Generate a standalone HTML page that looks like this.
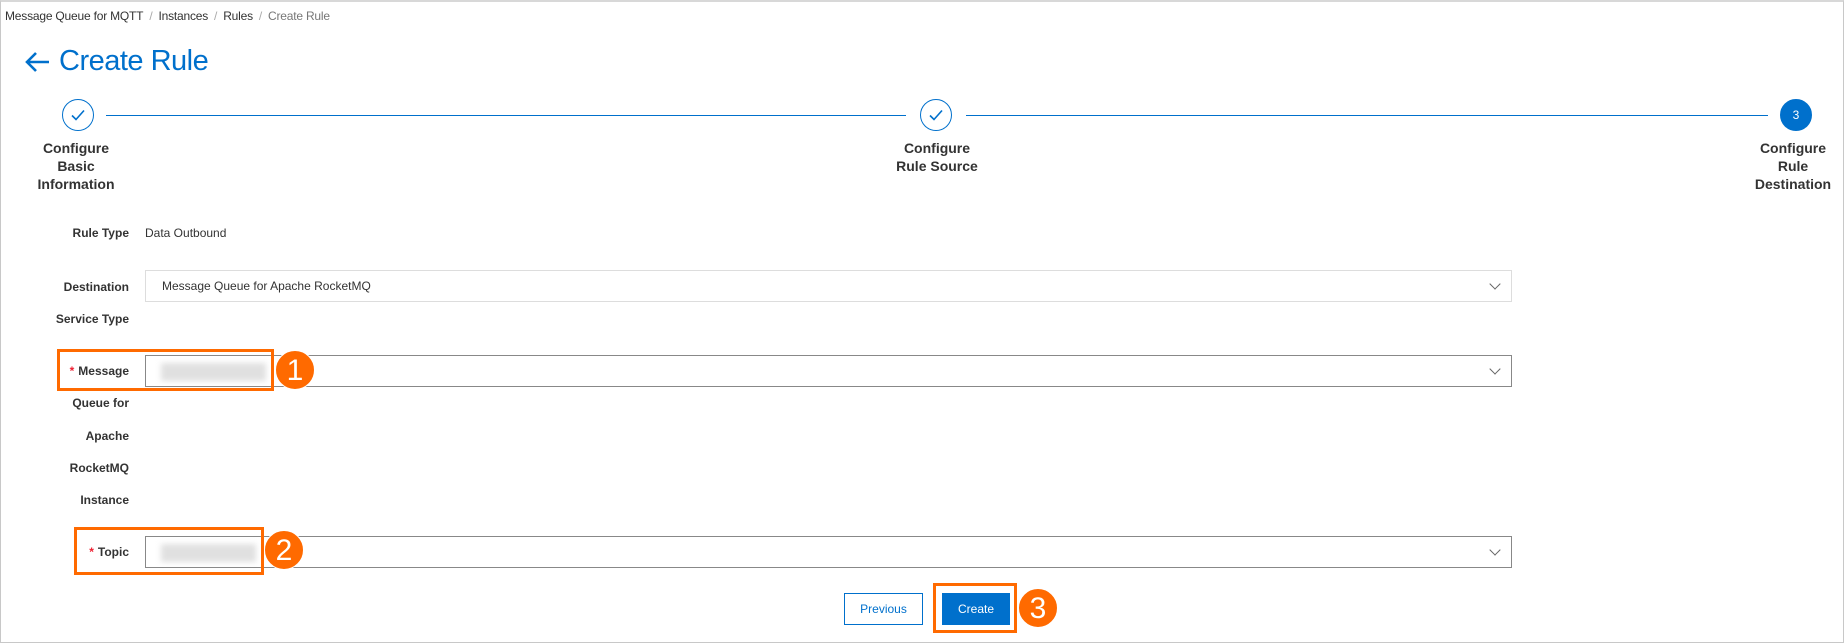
<!DOCTYPE html>
<html><head><meta charset="utf-8"><style>
*{margin:0;padding:0;box-sizing:border-box}
body{width:1844px;height:643px;position:relative;background:#fff;font-family:"Liberation Sans",Tahoma,sans-serif;color:#333;overflow:hidden}
.frame{position:absolute;left:0;top:0;width:1844px;height:643px;border:1px solid #c8c8c8;border-top:2px solid #d8d8d8}
.a{position:absolute;white-space:nowrap}
.bc{top:9px;left:5px;font-size:12px;color:#333;letter-spacing:-0.2px}
.bc .s{color:#aaa;margin:0 6px}
.bc .l{color:#777}
.title{top:45px;left:59px;font-size:29px;color:#0070cc;letter-spacing:-0.5px}
.circ{position:absolute;width:32px;height:32px;border-radius:50%;border:1px solid #0070cc;background:#fff}
.line{position:absolute;height:1px;background:#0070cc;top:115px}
.sl{position:absolute;font-size:14px;font-weight:bold;line-height:18px;text-align:center;color:#333;width:160px;top:139px}
.lab{position:absolute;font-size:12px;font-weight:bold;color:#333;text-align:right;width:100px;left:29px}
.sel{position:absolute;left:145px;width:1367px;height:32px;background:#fff}
.chev{position:absolute;right:12px;top:9px;width:8px;height:8px;border-right:1px solid #666;border-bottom:1px solid #666;transform:rotate(45deg)}
.blur{position:absolute;left:15px;top:7px;height:18px;background:#e0e0e0;filter:blur(3px)}
.ob{position:absolute;border:3px solid #ff6a00}
.num{position:absolute;width:40px;height:40px;border-radius:50%;background:#ff6a00;color:#fff;font-size:30px;text-align:center;line-height:40px;border:1px solid #fff}
.req{color:#e23;margin-right:4px}
</style></head><body>
<div class="frame"></div>
<div class="a bc">Message Queue for MQTT<span class="s">/</span>Instances<span class="s">/</span>Rules<span class="s">/</span><span class="l">Create Rule</span></div>
<svg class="a" style="left:24px;top:50px" width="28" height="24" viewBox="0 0 28 24"><path d="M25 12H3M12 3L3 12l9 9" fill="none" stroke="#0070cc" stroke-width="2.6"/></svg>
<div class="a title">Create Rule</div>

<div class="circ" style="left:62px;top:99px"><svg width="30" height="30" viewBox="0 0 30 30"><path d="M9 15.5l4 4 8-9" fill="none" stroke="#0070cc" stroke-width="1.6"/></svg></div>
<div class="line" style="left:106px;width:800px"></div>
<div class="circ" style="left:920px;top:99px"><svg width="30" height="30" viewBox="0 0 30 30"><path d="M9 15.5l4 4 8-9" fill="none" stroke="#0070cc" stroke-width="1.6"/></svg></div>
<div class="line" style="left:966px;width:802px"></div>
<div class="circ" style="left:1780px;top:99px;background:#0070cc;color:#fff;font-size:12px;text-align:center;line-height:30px">3</div>
<div class="sl" style="left:-4px">Configure<br>Basic<br>Information</div>
<div class="sl" style="left:857px">Configure<br>Rule Source</div>
<div class="sl" style="left:1713px">Configure<br>Rule<br>Destination</div>

<div class="lab" style="top:226px">Rule Type</div>
<div class="a" style="left:145px;top:226px;font-size:12px">Data Outbound</div>

<div class="lab" style="top:280px">Destination</div>
<div class="lab" style="top:312px">Service Type</div>
<div class="sel" style="top:270px;border:1px solid #ddd"><span class="a" style="left:16px;top:8px;font-size:12px">Message Queue for Apache RocketMQ</span><div class="chev"></div></div>

<div class="lab" style="top:364px"><span class="req">*</span>Message</div>
<div class="lab" style="top:396px">Queue for</div>
<div class="lab" style="top:429px">Apache</div>
<div class="lab" style="top:461px">RocketMQ</div>
<div class="lab" style="top:493px">Instance</div>
<div class="sel" style="top:355px;border:1px solid #888"><div class="blur" style="width:105px"></div><div class="chev"></div></div>
<div class="ob" style="left:57px;top:349px;width:217px;height:42px"></div>
<div class="num" style="left:275px;top:350px">1</div>

<div class="lab" style="top:545px"><span class="req">*</span>Topic</div>
<div class="sel" style="top:536px;border:1px solid #888"><div class="blur" style="width:95px"></div><div class="chev"></div></div>
<div class="ob" style="left:74px;top:527px;width:190px;height:48px"></div>
<div class="num" style="left:264px;top:530px">2</div>

<div class="a" style="left:844px;top:593px;width:79px;height:32px;border:1px solid #0070cc;color:#0070cc;font-size:12px;text-align:center;line-height:30px;background:#fff">Previous</div>
<div class="a" style="left:942px;top:593px;width:68px;height:32px;background:#0070cc;color:#fff;font-size:12px;text-align:center;line-height:32px">Create</div>
<div class="ob" style="left:933px;top:583px;width:84px;height:50px"></div>
<div class="num" style="left:1018px;top:588px">3</div>
</body></html>
